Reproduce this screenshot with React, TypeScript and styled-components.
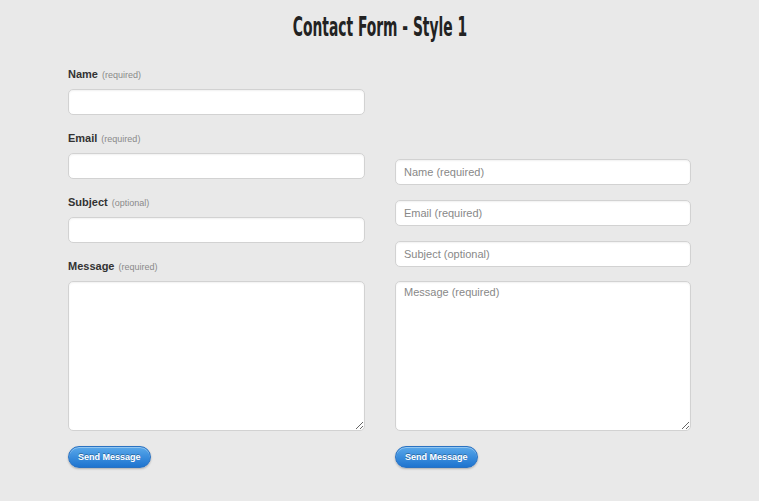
import styled, { createGlobalStyle } from "styled-components";

const GlobalStyle = createGlobalStyle`
  html, body {
    margin: 0;
    padding: 0;
    background: #e9e9e9;
  }
  body {
    font-family: "Liberation Sans", Arial, sans-serif;
    color: #333;
  }
`;

const Page = styled.div`
  width: 759px;
  height: 501px;
  background: #e9e9e9;
  overflow: hidden;
`;

const Header = styled.div`
  display: flex;
  justify-content: center;
  align-items: center;
  height: 40px;
  padding-top: 6px;
  margin-bottom: 21px;
`;

const Title = styled.h1`
  margin: 0;
  font-family: "Liberation Sans Narrow", "DejaVu Sans Condensed", sans-serif;
  font-weight: bold;
  font-size: 27px;
  color: #222;
  display: inline-block;
  transform: scaleX(0.57);
  white-space: nowrap;
`;

const Columns = styled.div`
  width: 623px;
  margin: 0 auto;
  display: grid;
  grid-template-columns: 297px 296px;
  column-gap: 30px;
`;

const Form = styled.form`
  display: flex;
  flex-direction: column;
  justify-content: flex-end;
`;

const Field = styled.div<{ $last?: boolean }>`
  display: flex;
  flex-direction: column;
  margin-bottom: ${(p) => (p.$last ? 0 : 16)}px;
`;

const Label = styled.label`
  display: block;
  height: 14px;
  line-height: 14px;
  margin-bottom: 8px;
  font-size: 11px;
  font-weight: bold;
  color: #333;
`;

const Hint = styled.span`
  font-size: 9px;
  font-weight: normal;
  color: #8a8a8a;
  margin-left: 4px;
`;

const Input = styled.input<{ $gap?: number }>`
  box-sizing: border-box;
  width: 100%;
  height: 26px;
  margin: 0 0 ${(p) => p.$gap ?? 0}px;
  padding: 0 8px;
  border: 1px solid #d2d2d2;
  border-radius: 5px;
  background: #fff;
  box-shadow: inset 0 1px 2px rgba(0, 0, 0, 0.06);
  font-family: "Liberation Sans", Arial, sans-serif;
  font-size: 11px;
  color: #555;
  outline: none;
  &::placeholder {
    color: #888;
  }
`;

const TextArea = styled.textarea`
  box-sizing: border-box;
  display: block;
  width: 100%;
  height: 150px;
  margin: 0;
  padding: 4px 8px;
  border: 1px solid #d2d2d2;
  border-radius: 5px;
  background: #fff;
  box-shadow: inset 0 1px 2px rgba(0, 0, 0, 0.06);
  font-family: "Liberation Sans", Arial, sans-serif;
  font-size: 11px;
  color: #555;
  resize: vertical;
  outline: none;
  &::placeholder {
    color: #888;
  }
`;

const SendButton = styled.button`
  align-self: flex-start;
  margin-top: 15px;
  height: 22px;
  padding: 0 9px;
  border: 1px solid #2a72c2;
  border-radius: 11px;
  background: linear-gradient(to bottom, #5aa9ea 0%, #3a8ddd 50%, #1f74cf 100%);
  box-shadow: 0 1px 2px rgba(0, 0, 0, 0.25), inset 0 1px 0 rgba(255, 255, 255, 0.35);
  color: #fff;
  font-family: "Liberation Sans", Arial, sans-serif;
  font-size: 9px;
  font-weight: bold;
  text-shadow: 0 -1px 0 rgba(0, 0, 0, 0.3);
  cursor: pointer;
`;

const labelled = [
  { name: "Name", hint: "(required)", area: false },
  { name: "Email", hint: "(required)", area: false },
  { name: "Subject", hint: "(optional)", area: false },
  { name: "Message", hint: "(required)", area: true },
];

export default function App() {
  return (
    <Page>
      <GlobalStyle />
      <Header>
        <Title>Contact Form - Style 1</Title>
      </Header>
      <Columns>
        {/* style 1: labels above the boxes */}
        <Form onSubmit={(e) => e.preventDefault()}>
          {labelled.map((f) => (
            <Field key={f.name} $last={f.area}>
              <Label>
                {f.name}
                <Hint>{f.hint}</Hint>
              </Label>
              {f.area ? <TextArea /> : <Input type="text" />}
            </Field>
          ))}
          <SendButton type="submit">Send Message</SendButton>
        </Form>

        {/* same form, with placeholders instead of labels */}
        <Form onSubmit={(e) => e.preventDefault()}>
          <Input type="text" placeholder="Name (required)" $gap={15} />
          <Input type="text" placeholder="Email (required)" $gap={15} />
          <Input type="text" placeholder="Subject (optional)" $gap={14} />
          <TextArea placeholder="Message (required)" />
          <SendButton type="submit">Send Message</SendButton>
        </Form>
      </Columns>
    </Page>
  );
}
